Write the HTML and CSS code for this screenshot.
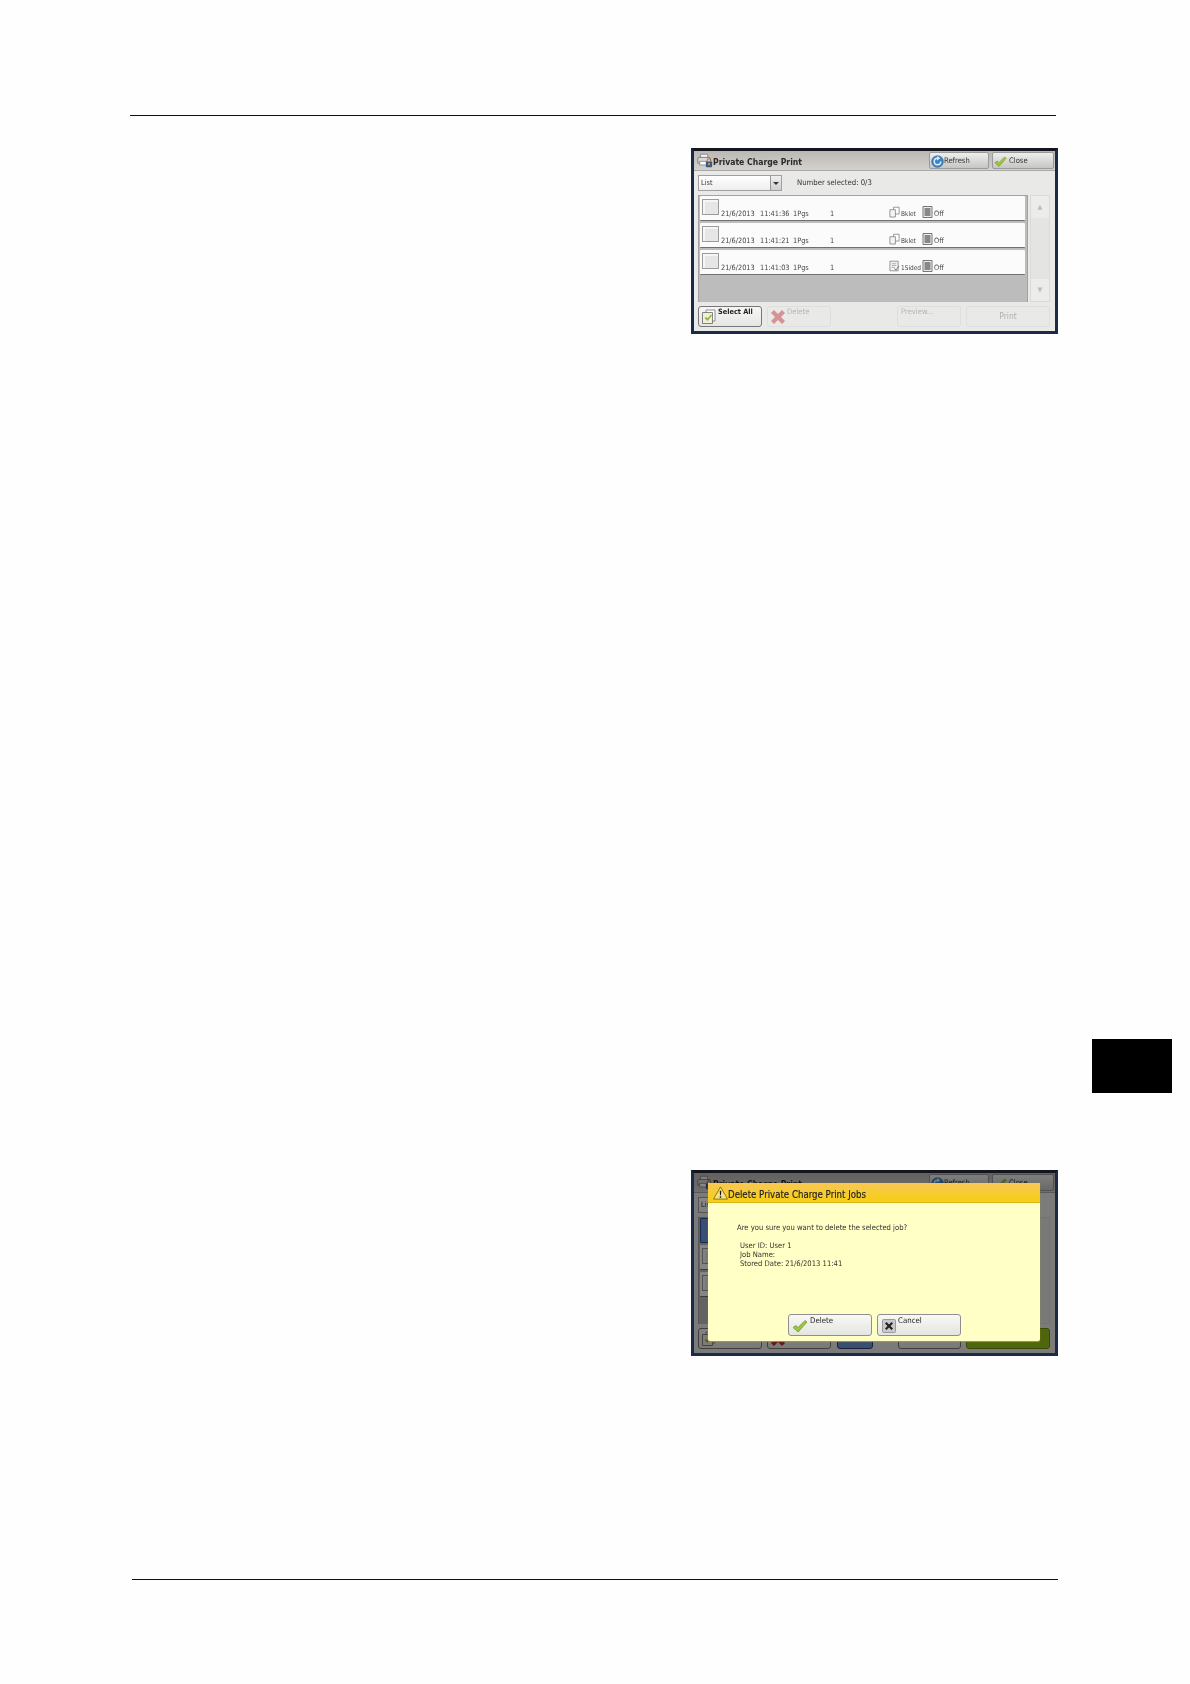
FILE: index.html
```html
<!DOCTYPE html>
<html lang="en">
<head>
<meta charset="utf-8">
<title>Private Charge Print</title>
<link rel="stylesheet" href="styles.css">
</head>
<body>
<svg class="sprites" width="0" height="0" aria-hidden="true">
  <symbol id="i-printer" viewBox="0 0 18 16">
    <path d="M4 1h8v4H4z" fill="#f4f4f4" stroke="#777" stroke-width=".8"/>
    <path d="M1 6q0-1.500 1.500-1.500h11Q15 4.500 15 6v5H1z" fill="#d8d8d8" stroke="#666" stroke-width=".8"/>
    <path d="M3 9h9v4H3z" fill="#fff" stroke="#777" stroke-width=".8"/>
    <rect x="10" y="9" width="7" height="6.500" rx="1" fill="#3d5a80"/>
    <path d="M11.500 9.500V8a2 2 0 0 1 4 0v1.500" fill="none" stroke="#b5752a" stroke-width="1.300"/>
    <circle cx="13.500" cy="12" r="1.100" fill="#e8b050"/>
  </symbol>
  <symbol id="i-refresh" viewBox="0 0 14 14">
    <circle cx="7" cy="7" r="6.300" fill="#3f82c4" stroke="#2a5f9a" stroke-width=".6"/>
    <path d="M10.500 7A3.500 3.500 0 1 1 7 3.500" fill="none" stroke="#dcebf8" stroke-width="1.600"/>
    <path d="M6.500 1.200 10 3.600 6.500 5.800z" fill="#dcebf8"/>
  </symbol>
  <symbol id="i-check" viewBox="0 0 16 14">
    <path d="M1 8.500 4 6.500 6 8.500 13 1.500 15 3 6.200 13z" fill="#9cc63c" stroke="#6f9424" stroke-width=".7"/>
  </symbol>
  <symbol id="i-copies" viewBox="0 0 12 12">
    <path d="M5 .8h6v7.400H5z" fill="#fff" stroke="#777" stroke-width=".8"/>
    <path d="M1 3.500h6v8H1z" fill="#f4f4f4" stroke="#777" stroke-width=".8"/>
  </symbol>
  <symbol id="i-single" viewBox="0 0 12 12">
    <path d="M1 .8h9v10.400H1z" fill="#f4f4f4" stroke="#777" stroke-width=".8"/>
    <path d="M3 3.500h5M3 5.500h5M3 7.500h3" stroke="#888" stroke-width=".7"/>
    <path d="M6 8.500 7.500 10.500 11 6" fill="none" stroke="#666" stroke-width=".9"/>
  </symbol>
  <symbol id="i-off" viewBox="0 0 11 12">
    <path d="M1 .5h9v11H1z" fill="#eee" stroke="#555" stroke-width=".8"/>
    <path d="M2.500 2h6v8h-6z" fill="#888"/>
  </symbol>
  <symbol id="i-selectall" viewBox="0 0 16 16">
    <path d="M5 1h9v11H5z" fill="#fff" stroke="#777" stroke-width=".8"/>
    <path d="M1.500 3.500h10v11h-10z" fill="#eef0d8" stroke="#666" stroke-width=".8"/>
    <path d="M3.500 9 5.500 8 6.500 9.500 10 5.500 11 6.500 6.500 12z" fill="#8ab82e"/>
  </symbol>
  <symbol id="i-x" viewBox="0 0 16 16">
    <path d="M1 4 4 1 8 5 12 1 15 4 11 8 15 12 12 15 8 11 4 15 1 12 5 8z" fill="#c22a33"/>
  </symbol>
  <symbol id="i-warn" viewBox="0 0 16 15">
    <path d="M8 1 15.500 14H.5z" fill="#f8e27a" stroke="#7a6420" stroke-width=".9"/>
    <path d="M7.200 5h1.600l-.3 5h-1z M7.200 11h1.600v1.700H7.200z" fill="#111"/>
  </symbol>
  <symbol id="i-cancel" viewBox="0 0 14 14">
    <rect x=".5" y=".5" width="13" height="13" rx="1" fill="#c9c9c9" stroke="#999"/>
    <path d="M3 4.500 4.500 3 7 5.500 9.500 3 11 4.500 8.500 7 11 9.500 9.500 11 7 8.500 4.500 11 3 9.500 5.500 7z" fill="#222"/>
  </symbol>
</svg>

<main class="page">
  <hr class="rule rule-top">

  <figure class="screen screen-first">
    <header class="titlebar">
      <svg class="ico-printer"><use href="#i-printer"/></svg>
      <h2 class="title">Private Charge Print</h2>
      <button class="tbtn"><svg class="ico-14"><use href="#i-refresh"/></svg>Refresh</button>
      <button class="tbtn tbtn-close"><svg class="ico-14"><use href="#i-check"/></svg>Close</button>
    </header>
    <div class="toolbar">
      <div class="select"><span class="select-label">List</span><span class="select-arrow"></span></div>
      <span class="count">Number selected: 0/3</span>
    </div>
    <div class="main">
      <div class="list">
        <div class="row"><span class="cb"></span><span class="c-date">21/6/2013</span><span class="c-time">11:41:36</span><span class="c-pgs">1Pgs</span><span class="c-qty">1</span><svg class="ico-11"><use href="#i-copies"/></svg><span class="c-side">Bklet</span><svg class="ico-11"><use href="#i-off"/></svg><span class="c-off">Off</span></div>
        <div class="row"><span class="cb"></span><span class="c-date">21/6/2013</span><span class="c-time">11:41:21</span><span class="c-pgs">1Pgs</span><span class="c-qty">1</span><svg class="ico-11"><use href="#i-copies"/></svg><span class="c-side">Bklet</span><svg class="ico-11"><use href="#i-off"/></svg><span class="c-off">Off</span></div>
        <div class="row"><span class="cb"></span><span class="c-date">21/6/2013</span><span class="c-time">11:41:03</span><span class="c-pgs">1Pgs</span><span class="c-qty">1</span><svg class="ico-11"><use href="#i-single"/></svg><span class="c-side">1Sided</span><svg class="ico-11"><use href="#i-off"/></svg><span class="c-off">Off</span></div>
      </div>
      <div class="scroll">
        <span class="sbtn">▲</span>
        <span class="sbtn">▼</span>
      </div>
    </div>
    <footer class="actions">
      <button class="abtn abtn-on"><svg class="ico-16"><use href="#i-selectall"/></svg><span class="abtn-text">Select All</span></button>
      <button class="abtn abtn-off"><svg class="ico-16 faded"><use href="#i-x"/></svg><span class="abtn-text">Delete</span></button>
      <button class="abtn abtn-off abtn-preview"><span class="abtn-text">Preview...</span></button>
      <button class="abtn abtn-off abtn-print"><span>Print</span></button>
    </footer>
  </figure>

  <div class="tab"></div>

  <figure class="screen screen-second">
    <header class="titlebar">
      <svg class="ico-printer"><use href="#i-printer"/></svg>
      <h2 class="title">Private Charge Print</h2>
      <button class="tbtn"><svg class="ico-14"><use href="#i-refresh"/></svg>Refresh</button>
      <button class="tbtn tbtn-close"><svg class="ico-14"><use href="#i-check"/></svg>Close</button>
    </header>
    <div class="toolbar">
      <div class="select"><span class="select-label">List</span><span class="select-arrow"></span></div>
    </div>
    <div class="main">
      <div class="list">
        <div class="row row-selected"></div>
        <div class="row"><span class="cb"></span></div>
        <div class="row"><span class="cb"></span></div>
      </div>
      <div class="scroll"></div>
    </div>
    <footer class="actions">
      <button class="abtn abtn-on"><svg class="ico-16"><use href="#i-selectall"/></svg></button>
      <button class="abtn abtn-on"><svg class="ico-16"><use href="#i-x"/></svg></button>
      <button class="abtn abtn-blue"></button>
      <button class="abtn abtn-on abtn-narrow"></button>
      <button class="abtn abtn-green abtn-print"></button>
    </footer>
    <div class="dim"></div>
    <section class="dialog">
      <header class="dialog-title"><svg class="ico-warn"><use href="#i-warn"/></svg>Delete Private Charge Print Jobs</header>
      <div class="dialog-body">
        <p class="question">Are you sure you want to delete the selected job?</p>
        <p class="details">User ID: User 1<br>Job Name:<br>Stored Date: 21/6/2013 11:41</p>
      </div>
      <div class="dialog-actions">
        <button class="dbtn"><svg class="ico-16"><use href="#i-check"/></svg><span class="dbtn-text">Delete</span></button>
        <button class="dbtn"><svg class="ico-14"><use href="#i-cancel"/></svg><span class="dbtn-text">Cancel</span></button>
      </div>
    </section>
  </figure>

  <hr class="rule rule-bottom">
</main>
</body>
</html>
```

FILE: styles.css
```css
* { box-sizing: border-box; }
html, body { margin: 0; padding: 0; }
body {
  background: #fefefe;
  color: #222;
  font-family: "DejaVu Sans", "Liberation Sans", sans-serif;
  font-stretch: condensed;
}
.sprites { position: absolute; }
.page { width: 1190px; height: 1684px; overflow: hidden; padding-top: 115px; }

.rule { border: 0; height: 1px; background: #111; margin: 0; }
.rule-top { width: 926px; margin-left: 130px; }
.rule-bottom { width: 926px; margin-left: 132px; margin-top: 223px; }

.tab { width: 80px; height: 54px; background: #000; margin: 705px 0 0 1092px; }

.screen {
  position: relative;
  width: 367px;
  height: 186px;
  margin: 0 0 0 691px;
  border: 3px solid #1b2a47;
  border-top-color: #14161f;
  background: #e9e9e7;
  font-size: 7.3px;
  line-height: 10px;
  font-stretch: condensed;
  filter: blur(.45px);
  display: flex;
  flex-direction: column;
}
.screen-first { margin-top: 32px; }
.screen-second { margin-top: 77px; }

.titlebar {
  height: 20px;
  flex: none;
  display: flex;
  align-items: center;
  gap: 3px;
  padding: 1px 1px 1px 3px;
  background: linear-gradient(#bbb7b2, #d4d2ce);
  border-bottom: 1px solid #a8a8a8;
}
.ico-printer { width: 16px; height: 15px; margin-right: -3px; }
.title { margin: 2px 0 0; flex: 1; font-size: 8.6px; font-weight: bold; color: #2a2a2a; font-stretch: condensed; }
.tbtn {
  width: 60px;
  height: 17px;
  padding: 1px 0 0 1px;
  display: flex;
  align-items: center;
  gap: 0;
  border: 1px solid #9a9a9a;
  border-radius: 2px;
  background: linear-gradient(#eeeeec, #c6c6c4);
  color: #333;
  font: inherit;
  font-size: 7.6px;
}
.tbtn-close { width: 62px; gap: 2px; }
.ico-14 { width: 13px; height: 13px; flex: none; }
.ico-16 { width: 16px; height: 16px; flex: none; }
.ico-11 { width: 11px; height: 12px; flex: none; }
.faded { opacity: .45; }

.toolbar {
  height: 24px;
  flex: none;
  display: flex;
  align-items: flex-start;
  padding: 4px 0 0 4px;
}
.select {
  width: 84px;
  height: 16px;
  display: flex;
  background: linear-gradient(#fff, #eee);
  border: 1px solid #a0a0a0;
}
.select-label { flex: 1; padding: 2px 0 0 2px; color: #333; }
.select-arrow {
  width: 11px;
  background: linear-gradient(#f0f0f0, #cfcfcf);
  border-left: 1px solid #999;
  position: relative;
}
.select-arrow::after {
  content: "";
  position: absolute;
  left: 2px;
  top: 6px;
  border: 3px solid transparent;
  border-top: 3px solid #333;
}
.count { margin: 3px 0 0 15px; color: #333; font-size: 7.7px; }

.main { flex: none; height: 107px; display: flex; gap: 2px; padding-left: 4px; }
.list {
  width: 330px;
  background: #bcbcbc;
  border: 1px solid #a2a2a2;
  border-width: 1px 1px 0 1px;
  display: flex;
  flex-direction: column;
  gap: 2px;
  padding: 0 2px 0 1px;
}
.row {
  height: 25px;
  flex: none;
  display: flex;
  align-items: flex-end;
  padding: 0 0 1px 2px;
  background: #fbfbfb;
  border-bottom: 1px solid #6f6f6f;
  border-radius: 1px;
  color: #444;
}
.row-selected { background: #6f93d6; border: 1px solid #2b4f9c; }
.row svg { margin-bottom: 1px; }
.row svg:first-of-type { margin-left: -1px; }
.cb {
  width: 17px;
  height: 16px;
  margin: 0 2px 4px 0;
  background: #e6e6e6;
  border: 1px solid #9c9c9c;
  box-shadow: inset 2px 2px 0 #f6f6f6;
}
.c-date { width: 39px; }
.c-time { width: 33px; }
.c-pgs { width: 37px; }
.c-qty { width: 60px; }
.c-side { width: 22px; white-space: nowrap; padding-left: 1px; font-size: 6.5px; }
.c-off { padding-left: 1px; }

.scroll {
  width: 20px;
  display: flex;
  flex-direction: column;
  justify-content: space-between;
  background: #e4e4e2;
  border: 1px solid #dadada;
}
.sbtn {
  height: 22px;
  display: flex;
  align-items: center;
  justify-content: center;
  background: #ececea;
  color: #bdbdbd;
  font-size: 7px;
}

.actions {
  flex: none;
  display: flex;
  gap: 5px;
  padding: 4px 0 0 4px;
}
.abtn {
  width: 64px;
  height: 21px;
  padding: 2px 0 0 2px;
  display: flex;
  align-items: flex-start;
  gap: 1px;
  border-radius: 3px;
  font: inherit;
  font-size: 7.3px;
  text-align: left;
}
.abtn-on { border: 1px solid #777; background: linear-gradient(#f6f6f4, #e6e6e4); color: #222; font-weight: bold; }
.abtn-off { border: 1px solid #dedede; background: #e9e9e7; color: #b5b5b5; }
.abtn-off .abtn-text { font-size: 7.6px; }
.abtn-text { margin-top: -2px; }
.abtn-preview { margin-left: 61px; padding-left: 3px; }
.abtn-print { width: 84px; justify-content: center; padding: 4px 0 0; font-size: 8.4px; color: #b0b0b0; }
.abtn-blue { width: 36px; margin-left: 1px; border: 1px solid #2a3f6a; background: #6f93d6; }
.abtn-narrow { width: 63px; margin-left: 20px; }
.abtn-green { border: 1px solid #6c8a10; background: #98c01a; }

.dim { position: absolute; inset: 0; background: rgba(0, 0, 0, .47); }
.dialog {
  position: absolute;
  left: 14px;
  top: 10px;
  width: 332px;
  height: 158px;
  display: flex;
  flex-direction: column;
  background: #ffffc6;
  border-radius: 2px;
  box-shadow: 0 1px 1px #b9942b;
}
.dialog-title {
  height: 20px;
  flex: none;
  display: flex;
  align-items: center;
  gap: 0;
  padding: 4px 0 0 5px;
  background: linear-gradient(#f8c756, #f6cf10);
  border-bottom: 1px solid #d8b51a;
  font-size: 9.6px;
  color: #222;
  font-weight: 500;
  -webkit-text-stroke: .15px #222;
}
.ico-warn { width: 15px; height: 14px; flex: none; margin-top: -3px; }
.dialog-body { flex: 1; padding: 20px 0 0 29px; font-size: 7.6px; color: #333; }
.question { margin: 0; line-height: 10px; }
.details { margin: 8px 0 0 3px; line-height: 9px; }
.dialog-actions { flex: none; display: flex; gap: 5px; padding: 0 0 5px 80px; }
.dbtn {
  width: 84px;
  height: 22px;
  padding: 2px 0 0 3px;
  display: flex;
  align-items: flex-start;
  gap: 2px;
  border: 1px solid #8f8f8f;
  border-radius: 3px;
  background: linear-gradient(#f8f8f4, #e4e4e0);
  font: inherit;
  font-size: 7.8px;
  font-weight: 500;
  color: #222;
}
.dbtn svg { align-self: center; }
.dbtn .ico-14 { width: 14px; height: 14px; margin-left: 1px; }
.dbtn-text { margin-top: -1px; }
```
